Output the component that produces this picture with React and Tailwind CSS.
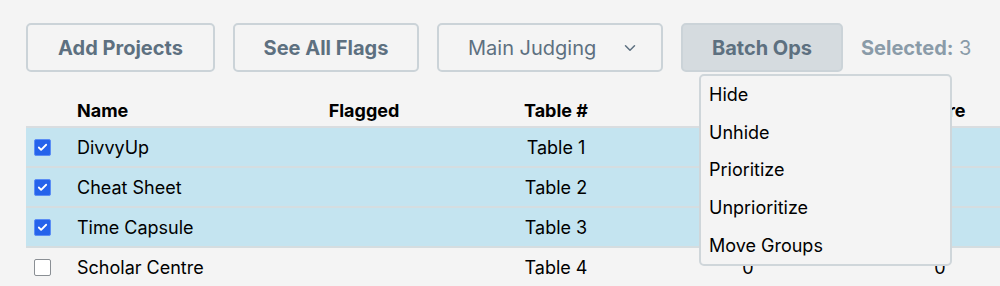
import React, { useState } from 'react'
import { ChevronDown, Check } from 'lucide-react'

const projects = [
  { id: 1, name: 'DivvyUp', table: 'Table 1', selected: true },
  { id: 2, name: 'Cheat Sheet', table: 'Table 2', selected: true },
  { id: 3, name: 'Time Capsule', table: 'Table 3', selected: true },
  { id: 4, name: 'Scholar Centre', table: 'Table 4', selected: false },
]

const batchActions = ['Hide', 'Unhide', 'Prioritize', 'Unprioritize', 'Move Groups']

const font = { fontFamily: 'Inter, "Noto Sans", sans-serif' }

const ToolButton = ({ children, className = '' }) => (
  <button
    className={`h-[49px] rounded-[5px] border-2 border-[#cbd3d8] text-[20px] font-bold text-[#5d7080] ${className}`}
  >
    {children}
  </button>
)

const Checkbox = ({ checked }) =>
  checked ? (
    <div className="flex h-[17px] w-[17px] items-center justify-center rounded-[2px] border border-[#5b8df5] bg-[#2563eb]">
      <Check size={11} strokeWidth={4} className="text-white" />
    </div>
  ) : (
    <div className="h-[17px] w-[17px] rounded-[2px] border border-[#8a8f94] bg-white" />
  )

export default function App() {
  const [rows] = useState(projects)
  const selectedCount = rows.filter((r) => r.selected).length

  return (
    <div className="h-[286px] w-[1000px] overflow-hidden bg-[#f4f4f4] text-black" style={font}>
      {/* toolbar */}
      <div className="flex items-center gap-[18px] pl-[26px] pt-[23px]">
        <ToolButton className="w-[189px]">Add Projects</ToolButton>
        <ToolButton className="w-[186px]">See All Flags</ToolButton>
        <div className="flex h-[49px] w-[226px] items-center justify-between rounded-[5px] border-2 border-[#cbd3d8] pl-[29px] pr-[22px] text-[20px] text-[#5d7080]">
          <span>Main Judging</span>
          <ChevronDown size={18} strokeWidth={2} className="text-[#5d7080]" />
        </div>
        <div className="relative">
          <button className="h-[49px] w-[162px] rounded-[5px] border-2 border-[#cbd3d8] bg-[#d5dbdf] text-[20px] font-bold text-[#5d7080]">
            Batch Ops
          </button>
          <div className="absolute left-[18px] top-[51px] z-10 w-[253px] rounded-[5px] border-2 border-[#cfd6da] bg-[#f4f4f4] text-[18px]">
            {batchActions.map((a) => (
              <div key={a} className="flex h-[37.6px] items-center pl-[8px]">
                {a}
              </div>
            ))}
          </div>
        </div>
        <div className="text-[20px] text-[#8a9ba8]">
          <span className="font-bold">Selected:</span> {selectedCount}
        </div>
      </div>

      {/* table */}
      <div className="ml-[26px] mt-[18px] w-[1010px] text-[18px]">
        <div className="flex h-[38px] items-center border-b-2 border-[#d9dde0] pt-[4px] text-[18px] font-bold">
          <div className="w-[38px]" />
          <div className="w-[204px] pl-[13px]">Name</div>
          <div className="w-[192px] text-center">Flagged</div>
          <div className="w-[192px] text-center">Table #</div>
          <div className="w-[192px] text-center">Votes</div>
          <div className="w-[192px] text-center">Score</div>
        </div>
        {rows.map((p) => (
          <div
            key={p.id}
            className={`flex h-[40px] items-center border-b-2 ${
              p.selected ? 'border-[#d5dde0] bg-[#c4e4f0]' : 'border-transparent'
            }`}
          >
            <div className="flex w-[38px] pl-[8px]">
              <Checkbox checked={p.selected} />
            </div>
            <div className="w-[204px] pl-[13px]">{p.name}</div>
            <div className="w-[192px] text-center" />
            <div className="w-[192px] text-center">{p.table}</div>
            <div className="w-[192px] text-center">0</div>
            <div className="w-[192px] text-center">0</div>
          </div>
        ))}
      </div>
    </div>
  )
}
